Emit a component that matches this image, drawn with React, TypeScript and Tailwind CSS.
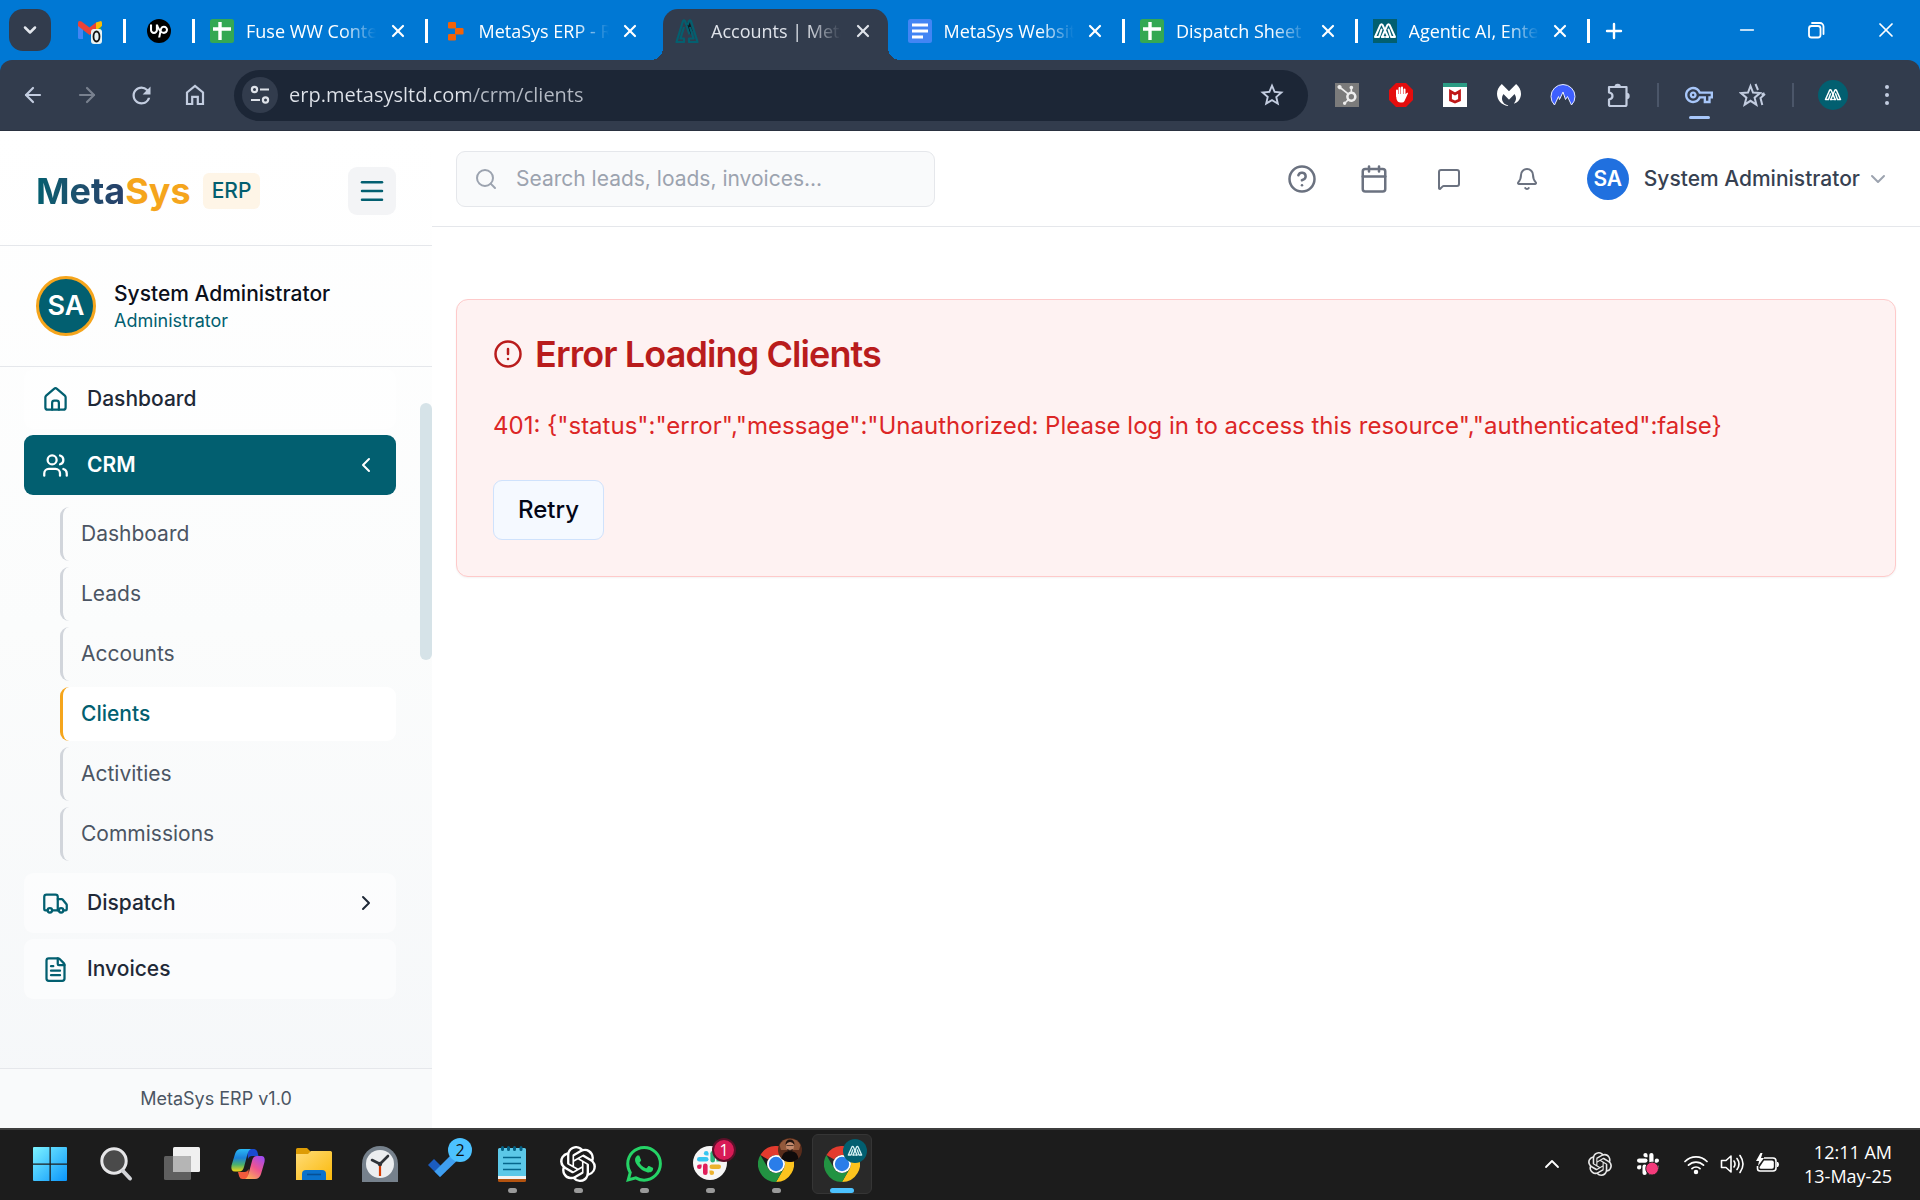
import type { ReactNode } from "react";
import {
  ArrowLeft,
  ArrowRight,
  Bell,
  Calendar,
  ChevronDown,
  ChevronLeft,
  ChevronRight,
  ChevronUp,
  CircleAlert,
  CircleHelp,
  FileText,
  Menu,
  MessageSquare,
  Minus,
  Plus,
  Search,
  Truck,
  Users,
  X,
} from "lucide-react";
import { SiHubspot, SiMalwarebytes, SiOpenai, SiUpwork, SiWhatsapp } from "react-icons/si";
import {
  MdOutlineStarBorder,
  MdOutlineVpnKey,
  MdRefresh,
} from "react-icons/md";

/* ---------- Shared marks ---------- */

function MetaMark({ className }: { className?: string }) {
  return (
    <svg viewBox="0 0 24 24" className={className} fill="none" stroke="currentColor" strokeWidth="2" strokeLinejoin="round" strokeLinecap="round" aria-hidden="true">
      <path d="M8.500 10.500 6 18H2L7.200 6.300Q8.500 4 9.800 6.300L15 18" />
      <path d="M15.500 10.500 18 18H22L16.800 6.300Q15.500 4 14.200 6.300L9 18" />
      <path d="M9 18h2M13 18h2" />
    </svg>
  );
}

function HouseIcon() {
  return (
    <svg viewBox="0 0 24 24" className="size-[27px]" fill="none" stroke="currentColor" strokeWidth="2" strokeLinecap="round" strokeLinejoin="round" aria-hidden="true">
      <path d="M3 10a2 2 0 0 1 .7-1.5l7-6a2 2 0 0 1 2.6 0l7 6A2 2 0 0 1 21 10v9a2 2 0 0 1-2 2H5a2 2 0 0 1-2-2z" />
      <path d="M9 21v-6a2 2 0 0 1 2-2h2a2 2 0 0 1 2 2v6" />
    </svg>
  );
}

/* ---------- Tab strip ---------- */

function GmailIcon() {
  return (
    <svg viewBox="0 0 26 26" className="size-[26px]" aria-hidden="true">
      <path d="M1 7v12.5A1.5 1.5 0 0 0 2.500 21H6V10z" fill="#4285f4" />
      <path d="M19 10v11h3.500a1.500 1.500 0 0 0 1.500-1.500V7z" fill="#34a853" />
      <path d="M19 4.500 24 3q1 .5 1 2v3l-6 4.500z" fill="#fbbc04" />
      <path d="M1 8V5q0-3 3.500-1.500l8 6 6.500-5v7.500l-6.500 5z" fill="#ea4335" />
      <rect x="14" y="11" width="11" height="15" rx="3" fill="#e8f3f3" />
      <ellipse cx="19.500" cy="18.500" rx="3" ry="5" fill="none" stroke="#111" strokeWidth="1.800" />
    </svg>
  );
}

function SheetsIcon() {
  return (
    <svg viewBox="0 0 24 24" className="size-6" aria-hidden="true">
      <rect width="24" height="24" rx="2.500" fill="#34a853" />
      <path d="M10 3v18M3 10h18" stroke="#fff" strokeWidth="3.400" />
    </svg>
  );
}

function ReplitIcon() {
  return (
    <svg viewBox="0 0 24 24" className="size-6" fill="#f26207" aria-hidden="true">
      <rect x="5" y="3" width="8" height="6.500" rx="1.200" />
      <rect x="12" y="9" width="8.500" height="6.500" rx="1.200" />
      <rect x="5" y="15" width="8" height="6.500" rx="1.200" />
    </svg>
  );
}

function DocsIcon() {
  return (
    <svg viewBox="0 0 24 24" className="size-6" aria-hidden="true">
      <rect width="24" height="24" rx="2.500" fill="#4285f4" />
      <path d="M4 6h16M4 12h16M4 18h11" stroke="#fff" strokeWidth="2.800" />
    </svg>
  );
}

function MetaFaviconOpen() {
  return (
    <svg viewBox="0 0 24 24" className="size-6" aria-hidden="true">
      <path d="M10.500 6 14 1.500l3.500 10-2.500 4z" fill="#101820" />
      <path d="M9 8 5.500 19.500H9V23H1.500L8 2q1-1.500 2 0l4.500 13.500" fill="none" stroke="#045f6f" strokeWidth="2.200" strokeLinejoin="round" />
      <path d="M15 8l3.500 11.500H14V23h8.500L16 2q-1-1.500-2 0l-1.500 4" fill="none" stroke="#045f6f" strokeWidth="2.200" strokeLinejoin="round" />
    </svg>
  );
}

type TabInfo = { title: string; icon: ReactNode; active?: boolean; divider: boolean };

const tabs: TabInfo[] = [
  { title: "Fuse WW Conte", icon: <SheetsIcon />, divider: true },
  { title: "MetaSys ERP - R", icon: <ReplitIcon />, divider: false },
  { title: "Accounts | Meta", icon: <MetaFaviconOpen />, active: true, divider: false },
  { title: "MetaSys Websit", icon: <DocsIcon />, divider: true },
  { title: "Dispatch Sheet -", icon: <SheetsIcon />, divider: true },
  {
    title: "Agentic AI, Ente",
    icon: (
      <span className="flex size-6 items-center justify-center bg-[#025f70] text-white">
        <MetaMark className="size-6" />
      </span>
    ),
    divider: true,
  },
];

function TabDivider() {
  return <span className="h-6 w-[3px] shrink-0 bg-white" />;
}

function BrowserTab({ tab }: { tab: TabInfo }) {
  return (
    <div className="relative flex h-full min-w-0 flex-1 items-center">
      {tab.active && (
        <>
          <span className="absolute inset-y-0 left-[3px] right-[5px] rounded-t-[15px] bg-[#323c4d]" />
          <span className="absolute -left-[9px] bottom-0 size-3 bg-[radial-gradient(circle_at_0_0,transparent_12px,#323c4d_12px)]" />
          <span className="absolute -right-[7px] bottom-0 size-3 bg-[radial-gradient(circle_at_100%_0,transparent_12px,#323c4d_12px)]" />
        </>
      )}
      <div
        className={
          tab.active
            ? "relative flex min-w-0 flex-1 items-center pb-2 pl-[15px] text-[#dfe3ea]"
            : "relative flex min-w-0 flex-1 items-center pb-2 pl-[15px] text-white"
        }
      >
        <span className="shrink-0">{tab.icon}</span>
        <span className="ml-3 min-w-0 flex-1 whitespace-nowrap text-[18px] leading-6 [mask-image:linear-gradient(to_right,#000_96px,transparent_130px)]">
          {tab.title}
        </span>
        <button type="button" aria-label="Close tab" className={tab.divider ? "mr-[17px] shrink-0" : "mr-5 shrink-0"}>
          <X className="size-5" strokeWidth={2.6} />
        </button>
      </div>
      {tab.divider && (
        <span className="flex pb-2">
          <TabDivider />
        </span>
      )}
    </div>
  );
}

function TabStrip() {
  return (
    <div className="flex h-[60px] items-end bg-[#0078d4]">
      <div className="flex h-full items-center pl-[9px]">
        <button type="button" aria-label="Search tabs" className="flex size-[42px] items-center justify-center rounded-[14px] bg-[#323c4d] text-[#e3e7ee]">
          <ChevronDown className="size-5" strokeWidth={3} />
        </button>
      </div>
      <div className="flex h-[51px] min-w-0 flex-1 items-center">
        <div className="flex items-center pb-2">
          <span className="ml-[26px] mr-5">
            <GmailIcon />
          </span>
          <TabDivider />
          <span className="ml-[21px] mr-[21px] flex size-6 items-center justify-center rounded-full bg-black text-white">
            <SiUpwork className="size-[18px]" />
          </span>
          <TabDivider />
        </div>
        <div className="flex h-full min-w-0 shrink basis-[1395px]">
          {tabs.map((tab) => (
            <BrowserTab key={tab.title} tab={tab} />
          ))}
        </div>
        <button type="button" aria-label="New tab" className="ml-3 pb-2 text-white">
          <Plus className="size-6" strokeWidth={2.4} />
        </button>
      </div>
      <div className="flex h-full items-center gap-[46px] pr-[22px] text-white">
        <button type="button" aria-label="Minimize">
          <Minus className="size-[22px]" strokeWidth={1.600} />
        </button>
        <button type="button" aria-label="Restore">
          <svg viewBox="0 0 24 24" className="size-6" fill="none" stroke="currentColor" strokeWidth="1.800" aria-hidden="true">
            <rect x="5" y="8" width="11.500" height="11.500" rx="2.500" />
            <path d="M8 5h8a3.500 3.500 0 0 1 3.500 3.500V16" strokeLinecap="round" />
          </svg>
        </button>
        <button type="button" aria-label="Close window">
          <X className="size-6" strokeWidth={1.700} />
        </button>
      </div>
    </div>
  );
}

/* ---------- Address bar ---------- */

function ExtensionSlot({ label, children }: { label: string; children: ReactNode }) {
  return (
    <button type="button" aria-label={label} className="flex h-12 w-[54px] items-center justify-center">
      {children}
    </button>
  );
}

function Toolbar() {
  return (
    <div className="bg-[#0078d4]">
      <div className="flex h-[71px] items-center rounded-t-[12px] border-b border-[#2a3140] bg-[#323c4d] text-[#c3cde0]">
        <div className="flex items-center pl-[6px]">
          <ExtensionSlot label="Back">
            <ArrowLeft className="size-6" strokeWidth={2.200} />
          </ExtensionSlot>
          <ExtensionSlot label="Forward">
            <ArrowRight className="size-6 text-[#79818f]" strokeWidth={2.200} />
          </ExtensionSlot>
          <ExtensionSlot label="Reload">
            <MdRefresh className="size-[27px]" />
          </ExtensionSlot>
          <ExtensionSlot label="Home">
            <svg viewBox="0 0 24 24" className="size-6" fill="none" stroke="currentColor" strokeWidth="2.200" aria-hidden="true">
              <path d="M4 9.500 12 3l8 6.500V21h-5.200v-7.200H9.200V21H4z" />
            </svg>
          </ExtensionSlot>
        </div>
        <div className="ml-3 flex h-[51px] min-w-0 flex-1 items-center rounded-full bg-[#1c2636] pl-2 pr-[22px]">
          <button type="button" aria-label="Site information" className="flex size-9 shrink-0 items-center justify-center rounded-full bg-[#323c4d] text-[#dfe3ea]">
            <svg viewBox="0 0 24 24" className="size-6" fill="none" stroke="currentColor" strokeWidth="2.200" aria-hidden="true">
              <circle cx="6.500" cy="6.500" r="2.600" />
              <path d="M12 6.500h9M3 17h9" />
              <circle cx="17.500" cy="17" r="2.600" />
            </svg>
          </button>
          <input
            type="text"
            aria-label="Address"
            defaultValue="erp.metasysltd.com/crm/clients"
            className="ml-[11px] min-w-0 flex-1 bg-[linear-gradient(to_right,#dfe3ea_180px,#b4bac4_180px)] bg-clip-text text-[20px] leading-7 text-transparent caret-white outline-none"
          />
          <button type="button" aria-label="Bookmark this page">
            <MdOutlineStarBorder className="size-7" />
          </button>
        </div>
        <div className="ml-3 flex items-center">
          <ExtensionSlot label="HubSpot">
            <span className="flex size-6 items-center justify-center bg-[#7b7b7b] text-[#ededed]">
              <SiHubspot className="size-5" />
            </span>
          </ExtensionSlot>
          <ExtensionSlot label="AdBlock">
            <svg viewBox="0 0 24 24" className="size-6" aria-hidden="true">
              <path d="M7 0h10l7 7v10l-7 7H7l-7-7V7z" fill="#e40d0d" />
              <path d="M8 13V7.500M10.500 12V5M13 12V4.500M15.500 12V6.500" stroke="#fff" strokeWidth="2" strokeLinecap="round" />
              <path d="M7 11h9.500l2-1.500q1 .5 0 2l-3 6.500q-.8 1.500-2.500 1.500h-1.500Q8.500 19.500 7.500 16z" fill="#fff" />
            </svg>
          </ExtensionSlot>
          <ExtensionSlot label="McAfee">
            <svg viewBox="0 0 24 24" className="size-6" aria-hidden="true">
              <path d="M0 0h24v24H0z" fill="#fff" />
              <path d="M0 0h24v4H0z" fill="#2c9c84" />
              <path d="M7.500 17V8.500L12 11l4.500-2.500V17L12 19z" fill="none" stroke="#c01818" strokeWidth="2.800" />
            </svg>
          </ExtensionSlot>
          <ExtensionSlot label="Malwarebytes">
            <SiMalwarebytes className="size-6 text-white" />
          </ExtensionSlot>
          <ExtensionSlot label="NordVPN">
            <svg viewBox="0 0 26 26" className="size-[26px]" aria-hidden="true">
              <path d="M4.500 23A12 12 0 1 1 21.500 23L17.500 14.500 15.500 17.500 13 10 9.500 17.500 8.500 14.500z" fill="#3e5fff" stroke="#e7ecff" strokeWidth="1" />
            </svg>
          </ExtensionSlot>
          <ExtensionSlot label="Extensions">
            <svg viewBox="0 0 26 26" className="ml-1 size-[26px]" aria-hidden="true">
              <path
                d="M3 5h17.500v17.500q0 1.500-1.500 1.500H4.500Q3 24 3 22.500v-5q3.500-.5 3.500-3.500T3 10.500z"
                fill="none"
                stroke="currentColor"
                strokeWidth="2.200"
                strokeLinejoin="round"
              />
              <path d="M8.500 5a3.200 3.200 0 0 1 6.400 0zM20.500 10.800a3.200 3.200 0 0 1 0 6.400z" fill="currentColor" />
            </svg>
          </ExtensionSlot>
          <span className="mx-[13px] h-6 w-[2px] bg-[#4b5669]" />
          <button type="button" aria-label="Saved passwords" className="relative flex h-12 w-[54px] items-center justify-center text-[#a8c7fa]">
            <MdOutlineVpnKey className="size-7" />
            <span className="absolute bottom-0 h-[3px] w-[21px] rounded-full bg-[#a8c7fa]" />
          </button>
          <ExtensionSlot label="Bookmarks">
            <svg viewBox="0 0 28 26" className="h-[26px] w-7" fill="none" stroke="currentColor" strokeWidth="2" aria-hidden="true">
              <path d="m11.500 4 2.500 6.500 7 .6-5.400 4.600 1.800 7-5.900-3.900L5.600 22.700l1.800-7L2 11.100l7-.6z" />
              <path d="m16.500 2 2.500 6M22.500 12.500l3-1.200M26 12l-4.500 4 1.800 7" />
            </svg>
          </ExtensionSlot>
          <span className="mx-[12px] h-6 w-[2px] bg-[#4b5669]" />
          <ExtensionSlot label="Profile">
            <span className="flex size-[30px] items-center justify-center rounded-full bg-[#025f70] text-white">
              <MetaMark className="size-[18px]" />
            </span>
          </ExtensionSlot>
          <button type="button" aria-label="Browser menu" className="mr-[6px] flex h-12 w-[54px] flex-col items-center justify-center gap-1">
            <span className="size-1 rounded-full bg-current" />
            <span className="size-1 rounded-full bg-current" />
            <span className="size-1 rounded-full bg-current" />
          </button>
        </div>
      </div>
    </div>
  );
}

/* ---------- Sidebar ---------- */

const crmLinks = ["Dashboard", "Leads", "Accounts", "Clients", "Activities", "Commissions"];

function Sidebar() {
  return (
    <aside className="flex w-[432px] shrink-0 flex-col bg-linear-to-b from-white via-[#fbfcfc] to-[#f5f7f9]">
      <div className="flex items-center justify-between border-b border-[#e5e7eb] pb-[30px] pl-9 pr-9 pt-9">
        <div className="flex items-center gap-3">
          <span className="text-[36px] font-bold leading-[48px] text-[#f5a51c]">
            <span className="bg-linear-to-r from-[#025f70] to-[#27406a] bg-clip-text text-transparent">Meta</span>Sys
          </span>
          <span className="rounded-md bg-[#fef5e7] px-[9px] py-[3px] text-[21px] font-medium leading-[30px] text-[#025f70]">ERP</span>
        </div>
        <button type="button" aria-label="Toggle sidebar" className="flex size-12 items-center justify-center rounded-[9px] bg-[#f3f4f6] text-[#025f70]">
          <Menu className="size-[30px]" />
        </button>
      </div>

      <div className="flex items-center gap-[18px] border-b border-[#e5e7eb] px-9 py-[30px]">
        <span className="flex size-[60px] shrink-0 items-center justify-center rounded-full border-[3px] border-[#f5a51c] bg-[#025f70] text-[27px] font-semibold text-white">
          SA
        </span>
        <div className="flex flex-col">
          <span className="text-[21px] font-medium leading-[30px] text-[#0b0f1a]">System Administrator</span>
          <span className="text-[18px] leading-6 text-[#025f70]">Administrator</span>
        </div>
      </div>

      <div className="flex min-h-0 flex-1 justify-between">
        <nav aria-label="Main" className="flex min-w-0 flex-1 flex-col gap-[6px] pl-6 pr-6 pt-[2px] text-[21px] font-medium leading-[30px] text-[#1f2937]">
          <a href="#dashboard" className="flex h-[60px] items-center gap-[18px] rounded-[9px] bg-white/50 px-[18px]">
            <span className="text-[#025f70]">
              <HouseIcon />
            </span>
            Dashboard
          </a>
          <button type="button" aria-expanded="true" className="flex h-[60px] items-center gap-[18px] rounded-[9px] bg-[#025f70] px-[18px] text-left font-semibold text-white">
            <Users className="size-[27px]" />
            <span className="flex-1">CRM</span>
            <ChevronLeft className="size-6" />
          </button>
          <ul className="my-[6px] ml-9 flex flex-col gap-[6px] font-normal text-[#4b5563]">
            {crmLinks.map((label) => (
              <li key={label}>
                <a
                  href={"#" + label.toLowerCase()}
                  className={
                    label === "Clients"
                      ? "flex h-[54px] items-center rounded-[9px] border-l-[3px] border-[#f5a51c] bg-white pl-[18px] font-medium text-[#025f70]"
                      : "flex h-[54px] items-center rounded-[9px] border-l-[3px] border-[#d1d5db] pl-[18px]"
                  }
                >
                  {label}
                </a>
              </li>
            ))}
          </ul>
          <button type="button" aria-expanded="false" className="flex h-[60px] items-center gap-[18px] rounded-[9px] bg-white/50 px-[18px] text-left">
            <Truck className="size-[27px] text-[#025f70]" />
            <span className="flex-1">Dispatch</span>
            <ChevronRight className="size-6" />
          </button>
          <a href="#invoices" className="flex h-[60px] items-center gap-[18px] rounded-[9px] bg-white/50 px-[18px]">
            <FileText className="size-[27px] text-[#025f70]" />
            Invoices
          </a>
        </nav>
        <div className="w-3 shrink-0 pt-9">
          <div className="h-[257px] rounded-full bg-[#d6e3e8]" />
        </div>
      </div>

      <div className="border-t border-[#e5e7eb] bg-[#f9fafb] py-[17px] text-center text-[18px] leading-[25px] text-[#4b5563]">MetaSys ERP v1.0</div>
    </aside>
  );
}

/* ---------- Main area ---------- */

function Header() {
  return (
    <header className="flex h-24 items-center justify-between border-b border-[#e5e7eb] bg-white pl-6 pr-[30px]">
      <label className="flex h-14 w-[479px] items-center gap-[18px] rounded-[9px] border border-[#e5e7eb] bg-[#f9fafb] px-[17px] text-[#9ca3af]">
        <Search className="size-6 shrink-0" />
        <span className="sr-only">Search</span>
        <input
          type="search"
          placeholder="Search leads, loads, invoices..."
          className="min-w-0 flex-1 bg-transparent text-[21px] leading-[30px] text-[#1f2937] outline-none placeholder:text-[#9ca3af]"
        />
      </label>
      <div className="flex items-center text-[#6b7280]">
        <button type="button" aria-label="Help" className="mr-[42px]">
          <CircleHelp className="size-[30px]" />
        </button>
        <button type="button" aria-label="Calendar" className="mr-12">
          <Calendar className="size-[30px]" />
        </button>
        <button type="button" aria-label="Messages" className="mr-[54px]">
          <MessageSquare className="size-6" />
        </button>
        <button type="button" aria-label="Notifications" className="mr-12">
          <Bell className="size-6" />
        </button>
        <button type="button" className="flex items-center">
          <span className="flex size-[42px] items-center justify-center rounded-full bg-[#2070df] text-[21px] font-semibold text-white">SA</span>
          <span className="ml-[15px] text-[21px] font-medium leading-[30px] text-[#374151]">System Administrator</span>
          <ChevronDown className="ml-[6px] size-6 text-[#9ca3af]" />
        </button>
      </div>
    </header>
  );
}

function Main() {
  return (
    <div className="flex min-w-0 flex-1 flex-col bg-white">
      <Header />
      <main className="px-6 pt-[72px]">
        <section className="flex flex-col items-start rounded-xl border border-[#fecaca] bg-[#fef2f2] p-9 shadow-xs">
          <h1 className="flex items-center gap-3 text-[36px] font-semibold leading-9 tracking-tight text-[#b91c1c]">
            <CircleAlert className="size-[30px]" />
            Error Loading Clients
          </h1>
          <p className="mt-9 text-[24px] leading-9 text-[#dc2626]">
            {'401: {"status":"error","message":"Unauthorized: Please log in to access this resource","authenticated":false}'}
          </p>
          <button type="button" className="mt-9 flex h-[60px] items-center rounded-[9px] border border-[#cfe2fc] bg-[#f5f9ff] px-6 text-[24px] font-medium text-[#030617]">
            Retry
          </button>
        </section>
      </main>
    </div>
  );
}

/* ---------- Taskbar ---------- */

function WindowsIcon() {
  return (
    <svg viewBox="0 0 36 36" className="size-9" aria-hidden="true">
      <defs>
        <linearGradient id="win" x1="0" y1="0" x2="1" y2="1">
          <stop offset="0" stopColor="#7df3ff" />
          <stop offset="1" stopColor="#0a95fb" />
        </linearGradient>
      </defs>
      <path d="M1 2a1 1 0 0 1 1-1h15.500v16.500H1zM18.800 1H34a1 1 0 0 1 1 1v15.500H18.800zM1 18.800h16.500V35H2a1 1 0 0 1-1-1zM18.800 18.800H35V34a1 1 0 0 1-1 1H18.800z" fill="url(#win)" />
    </svg>
  );
}

function SearchGlass() {
  return (
    <svg viewBox="0 0 36 36" className="size-9" aria-hidden="true">
      <circle cx="16" cy="15" r="12.200" fill="#4a4a4a" stroke="#e6e6e8" strokeWidth="3" />
      <path d="m25 25 7 7.500" stroke="#d2d4d8" strokeWidth="4" strokeLinecap="round" />
    </svg>
  );
}

function TaskView() {
  return (
    <svg viewBox="0 0 36 36" className="size-9" aria-hidden="true">
      <rect x="9" y="1" width="27" height="25" rx="1.500" fill="#f0f0f0" />
      <rect x="0" y="10" width="27" height="24" rx="1.500" fill="#5f5f5f" />
      <path d="M9 10h16.500a1.500 1.500 0 0 1 1.500 1.500V26H9z" fill="#b5b5b5" />
    </svg>
  );
}

function CopilotIcon() {
  return (
    <svg viewBox="0 0 36 36" className="size-9" aria-hidden="true">
      <defs>
        <linearGradient id="cpA" x1="0" y1="0" x2="0" y2="1">
          <stop offset="0" stopColor="#2bb9f5" />
          <stop offset=".4" stopColor="#1b80d8" />
          <stop offset=".7" stopColor="#4cb26c" />
          <stop offset="1" stopColor="#f3d715" />
        </linearGradient>
        <linearGradient id="cpB" x1=".8" y1="0" x2=".2" y2="1">
          <stop offset="0" stopColor="#a14bf0" />
          <stop offset=".5" stopColor="#ee5590" />
          <stop offset="1" stopColor="#fdae58" />
        </linearGradient>
      </defs>
      <path d="M17 3h7q2.500 0 3.300 2.500L28.500 10H22q-3 0-4 3z" fill="#1a4bd0" />
      <path d="M19 33h-6.500q-2.500 0-3.300-2.500L8 26h6.500q3 0 4-3z" fill="#f25a3c" />
      <path d="M11 3h10q-2.500 1-3.500 5l-3.500 13q-1.200 4.500-5 4.500H5q-4.500 0-3.500-6L5 8q1.500-5 6-5z" fill="url(#cpA)" />
      <path d="M25 33H15q2.500-1 3.500-5L22 15q1.200-5 5-5h4.500q4 0 3 6L31 28q-1.500 5-6 5z" fill="url(#cpB)" />
    </svg>
  );
}

function FolderIcon() {
  return (
    <svg viewBox="0 0 36 36" className="size-9" aria-hidden="true">
      <defs>
        <linearGradient id="fold" x1="0" y1="0" x2="1" y2="1">
          <stop offset="0" stopColor="#ffdc78" />
          <stop offset="1" stopColor="#fbb90a" />
        </linearGradient>
      </defs>
      <path d="M0 3.500A1.500 1.500 0 0 1 1.500 2H11l4 4v5H0z" fill="#dd9c05" />
      <path d="M0 8h12l3-3h19.500A1.500 1.500 0 0 1 36 6.500V34H0z" fill="url(#fold)" />
      <path d="M6 34v-6q0-4 4-4h16q4 0 4 4v6z" fill="#0a72cc" />
      <path d="M11 28.500h14" stroke="#064f94" strokeWidth="1.600" />
    </svg>
  );
}

function ClockIcon() {
  return (
    <svg viewBox="0 0 36 36" className="size-9" aria-hidden="true">
      <path d="M0 36V18a18 18 0 0 1 36 0v18z" fill="#76818c" />
      <circle cx="18" cy="18" r="14" fill="#eceef0" />
      <path d="m10 14 8 4 8-8" fill="none" stroke="#2f3338" strokeWidth="2.600" strokeLinecap="round" strokeLinejoin="round" />
      <path d="M18 18v12" stroke="#d83b01" strokeWidth="2.200" />
      <circle cx="18" cy="18" r="2.200" fill="#2f3338" />
    </svg>
  );
}

function TodoIcon() {
  return (
    <svg viewBox="0 0 36 36" className="size-9" aria-hidden="true">
      <path d="m0 19 6-6 12 12-6 6z" fill="#1b5cc0" />
      <path d="m12 31-5.500-5.500L29 3l6 6z" fill="#3f9ff0" />
    </svg>
  );
}

function NotepadIcon() {
  return (
    <svg viewBox="0 0 36 36" className="size-9" aria-hidden="true">
      <path d="M4 30h28v4.500a1.500 1.500 0 0 1-1.500 1.500h-25A1.500 1.500 0 0 1 4 34.500z" fill="#b4530f" />
      <path d="M4 29h28v4H4z" fill="#f3f3f3" />
      <path d="M4 3.500A1.500 1.500 0 0 1 5.500 2h25A1.500 1.500 0 0 1 32 3.500V30H4z" fill="#5cc8e8" />
      <path d="M9 11.500h18M9 17.500h18M9 23.500h18" stroke="#05668c" strokeWidth="1.700" />
      <path d="M8.500 1.500v2M14.500 1.500v2M20.500 1.500v2M27 1.500v2" stroke="#056083" strokeWidth="3" strokeLinecap="round" />
    </svg>
  );
}

function SlackShape({ colors }: { colors: [string, string, string, string] }) {
  const [blue, green, yellow, red] = colors;
  return (
    <>
      <g fill={blue}>
        <rect x="0" y="6" width="11.500" height="4.600" rx="2.300" />
        <path d="M9.200 0a2.300 2.300 0 0 1 2.300 2.300v2.300H9.200a2.300 2.300 0 0 1 0-4.600z" />
      </g>
      <g fill={green}>
        <rect x="13.400" y="0" width="4.600" height="11.500" rx="2.300" />
        <path d="M24 8.300a2.300 2.300 0 0 1-2.300 2.300h-2.300V8.300a2.300 2.300 0 0 1 4.600 0z" />
      </g>
      <g fill={yellow}>
        <rect x="12.500" y="13.400" width="11.500" height="4.600" rx="2.300" />
        <path d="M14.800 24a2.300 2.300 0 0 1-2.300-2.300v-2.300h2.300a2.300 2.300 0 0 1 0 4.600z" />
      </g>
      <g fill={red}>
        <rect x="6" y="12.500" width="4.600" height="11.500" rx="2.300" />
        <path d="M0 15.700a2.300 2.300 0 0 1 2.300-2.300h2.300v2.300a2.300 2.300 0 0 1-4.600 0z" />
      </g>
    </>
  );
}

function SlackIcon() {
  return (
    <svg viewBox="0 0 36 36" className="size-9" aria-hidden="true">
      <circle cx="18" cy="17" r="17" fill="#f6f6f6" />
      <g transform="translate(5 5)">
        <SlackShape colors={["#36c5f0", "#2eb67d", "#ecb22e", "#e01e5a"]} />
      </g>
    </svg>
  );
}

function ChromeIcon() {
  return (
    <svg viewBox="0 0 36 36" className="size-9" aria-hidden="true">
      <path d="M2.400 9A18 18 0 0 1 33.600 9H18a9 9 0 0 0-7.800 4.500z" fill="#e33b2e" />
      <path d="M33.600 9A18 18 0 0 1 18 36l7.800-13.500A9 9 0 0 0 25.800 13.500L18 9z" fill="#fcc31e" />
      <path d="M18 36A18 18 0 0 1 2.400 9l7.800 13.500a9 9 0 0 0 15.600 0z" fill="#229342" />
      <circle cx="18" cy="18" r="9" fill="#fff" />
      <circle cx="18" cy="18" r="7.200" fill="#2a7de9" />
    </svg>
  );
}

function PortraitBadge() {
  return (
    <svg viewBox="0 0 24 24" className="size-6" aria-hidden="true">
      <circle cx="12" cy="12" r="12" fill="#5a2d1c" />
      <path d="M1.500 7A12 12 0 0 1 22.500 7L21 12H3z" fill="#93593b" />
      <ellipse cx="12" cy="8" rx="4" ry="5.500" fill="#c48a6c" />
      <path d="M7.500 7q0-5.500 4.500-5.500T16.500 7q-2-3-4.500-3T7.500 7z" fill="#20130f" />
      <path d="M8.500 7.500h7M9.500 11.500q2.500 2 5 0l-.5 2-2 1-2-1z" stroke="#20130f" strokeWidth=".7" fill="#20130f" />
      <path d="M3.500 20.500Q5 14 9 13.500h6q4 .5 5.500 7A12 12 0 0 1 3.500 20.500z" fill="#100b0b" />
    </svg>
  );
}

type TaskItem = { label: string; icon: ReactNode; state?: "running" | "active"; badge?: ReactNode };

const taskItems: TaskItem[] = [
  { label: "Start", icon: <WindowsIcon /> },
  { label: "Search", icon: <SearchGlass /> },
  { label: "Task view", icon: <TaskView /> },
  { label: "Copilot", icon: <CopilotIcon /> },
  { label: "File Explorer", icon: <FolderIcon /> },
  { label: "Clock", icon: <ClockIcon /> },
  {
    label: "To Do",
    icon: <TodoIcon />,
    badge: <span className="flex size-6 items-center justify-center rounded-full bg-[#4cc2ff] text-[16px] leading-6 text-[#101010]">2</span>,
  },
  { label: "Notepad", icon: <NotepadIcon />, state: "running" },
  { label: "ChatGPT", icon: <SiOpenai className="size-9 text-white" />, state: "running" },
  { label: "WhatsApp", icon: <SiWhatsapp className="size-9 text-[#25d366]" />, state: "running" },
  {
    label: "Slack",
    icon: <SlackIcon />,
    state: "running",
    badge: <span className="flex size-6 items-center justify-center rounded-full border-2 border-[#5c1029] bg-[#d81b56] text-[16px] leading-5 text-white">1</span>,
  },
  { label: "Chrome, personal", icon: <ChromeIcon />, state: "running", badge: <PortraitBadge /> },
  {
    label: "Chrome, MetaSys",
    icon: <ChromeIcon />,
    state: "active",
    badge: (
      <span className="flex size-6 items-center justify-center rounded-full bg-[#025f70] text-[#d7f3f5]">
        <MetaMark className="size-4" />
      </span>
    ),
  },
];

function Taskbar() {
  return (
    <footer className="flex h-[72px] items-center justify-between border-t-2 border-[#3e3e3e] bg-[#1c1c1c] pb-[2px] pl-[17px] pr-7 text-white">
      <div className="flex items-center">
        {taskItems.map((item) => (
          <button key={item.label} type="button" aria-label={item.label} className="flex w-[66px] justify-center">
            <span
              className={
                item.state === "active"
                  ? "relative flex size-[60px] items-center justify-center rounded-[6px] border border-[#353535] bg-[#292929]"
                  : "relative flex size-[60px] items-center justify-center"
              }
            >
              {item.icon}
              {item.badge && <span className="absolute right-1 top-1">{item.badge}</span>}
              {item.state === "running" && <span className="absolute bottom-[1px] h-[5px] w-[9px] rounded-full bg-[#9a9a9a]" />}
              {item.state === "active" && <span className="absolute bottom-0 h-[5px] w-6 rounded-full bg-[#4cc2ff]" />}
            </span>
          </button>
        ))}
      </div>
      <div className="flex items-center">
        <button type="button" aria-label="Show hidden icons" className="mr-6">
          <ChevronUp className="size-6" strokeWidth={1.800} />
        </button>
        <SiOpenai className="mr-[25px] size-6 text-[#e8e8e8]" />
        <svg viewBox="0 0 24 24" className="mr-[25px] size-[22px]" aria-hidden="true">
          <SlackShape colors={["#fff", "#fff", "#fff", "#fff"]} />
          <circle cx="16.500" cy="17" r="7" fill="#f43b7b" stroke="#1c1c1c" strokeWidth="1" />
        </svg>
        <svg viewBox="0 0 24 24" className="mr-3 size-6" fill="none" stroke="currentColor" strokeWidth="1.700" strokeLinecap="round" aria-hidden="true">
          <path d="M1 9.500a15.500 15.500 0 0 1 22 0M4.500 13.200a10.500 10.500 0 0 1 15 0M8 16.700a5.600 5.600 0 0 1 8 0" />
          <circle cx="12" cy="20" r="1.400" fill="currentColor" />
        </svg>
        <svg viewBox="0 0 24 24" className="mr-3 size-6" fill="none" stroke="currentColor" strokeWidth="1.600" strokeLinecap="round" strokeLinejoin="round" aria-hidden="true">
          <path d="M11 4 6 8.500H1.500v7H6l5 4.500z" />
          <path d="M14 9q2 3 0 6M17 6.500q4 5.500 0 11M20 3.500q6 8.500 0 17" />
        </svg>
        <svg viewBox="0 0 24 24" className="mr-6 size-6" aria-hidden="true">
          <path d="M8 6h9q3 0 3 3v7q0 3-3 3H4q-2.500 0-2.500-2.500V14" fill="none" stroke="currentColor" strokeWidth="1.600" />
          <path d="M8 8.500h8q1.800 0 1.800 1.800V15q0 1.700-1.800 1.700H5q-1.500 0-1.500-1.500z" fill="currentColor" />
          <path d="M21 10h1q2 2.500 0 5h-1z" fill="currentColor" />
          <path d="M4.500 1 0 9h3L2 14l6-8H5l1.500-5z" fill="currentColor" />
        </svg>
        <div className="text-right text-[18px] leading-6">
          <div>12:11 AM</div>
          <div>13-May-25</div>
        </div>
      </div>
    </footer>
  );
}

export default function App() {
  return (
    <div className="flex min-h-screen flex-col bg-white font-['Open_Sans','Noto_Sans',sans-serif]">
      <TabStrip />
      <Toolbar />
      <div className="flex flex-1 font-['Inter','Liberation_Sans',sans-serif]">
        <Sidebar />
        <Main />
      </div>
      <Taskbar />
    </div>
  );
}
